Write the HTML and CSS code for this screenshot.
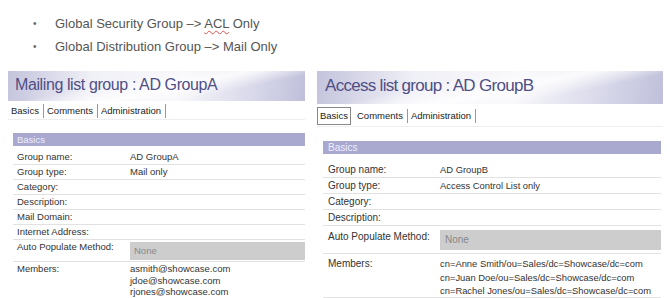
FILE: index.html
```html
<!DOCTYPE html>
<html lang="en">
<head>
  <meta charset="UTF-8">
  <title>AD Groups</title>
  <link rel="stylesheet" href="styles.css">
</head>
<body>

  <ul class="notes">
    <li>Global Security Group –&gt; <span class="typo">ACL</span> Only</li>
    <li>Global Distribution Group –&gt; Mail Only</li>
  </ul>

  <div class="panels">
    <!-- Mailing list group -->
    <div class="panel panel-a">
      <div class="title">Mailing list group : AD GroupA</div>
      <div class="tabs">
        <span class="tab">Basics</span>
        <span class="tab">Comments</span>
        <span class="tab">Administration</span>
      </div>
      <div class="section">Basics</div>
      <div class="row"><span class="label">Group name:</span><span class="value">AD GroupA</span></div>
      <div class="row"><span class="label">Group type:</span><span class="value">Mail only</span></div>
      <div class="row"><span class="label">Category:</span></div>
      <div class="row"><span class="label">Description:</span></div>
      <div class="row"><span class="label">Mail Domain:</span></div>
      <div class="row"><span class="label">Internet Address:</span></div>
      <div class="row row-auto"><span class="label">Auto Populate Method:</span><span class="select">None</span></div>
      <div class="row row-members">
        <span class="label">Members:</span>
        <span class="value">asmith@showcase.com<br>jdoe@showcase.com<br>rjones@showcase.com</span>
      </div>
    </div>

    <!-- Access list group -->
    <div class="panel panel-b">
      <div class="title">Access list group : AD GroupB</div>
      <div class="tabs">
        <span class="tab active">Basics</span>
        <span class="tab">Comments</span>
        <span class="tab">Administration</span>
      </div>
      <div class="section">Basics</div>
      <div class="row"><span class="label">Group name:</span><span class="value">AD GroupB</span></div>
      <div class="row"><span class="label">Group type:</span><span class="value">Access Control List only</span></div>
      <div class="row"><span class="label">Category:</span></div>
      <div class="row"><span class="label">Description:</span></div>
      <div class="row row-auto"><span class="label">Auto Populate Method:</span><span class="select">None</span></div>
      <div class="row row-members">
        <span class="label">Members:</span>
        <span class="value">cn=Anne Smith/ou=Sales/dc=Showcase/dc=com<br>cn=Juan Doe/ou=Sales/dc=Showcase/dc=com<br>cn=Rachel Jones/ou=Sales/dc=Showcase/dc=com</span>
      </div>
    </div>
  </div>

</body>
</html>
```

FILE: styles.css
```css
body {
  margin: 0;
  padding: 0 7px 0 8px;
  background: #fff;
  font-family: "Liberation Sans", Arial, sans-serif;
  color: #333;
  overflow: hidden;
}

.notes {
  margin: 0;
  padding: 15px 0 0 47px;
  list-style: none;
  font-size: 13px;
  color: #555;
}

.notes li {
  position: relative;
  height: 23px;
  line-height: 17px;
}

.notes li::before {
  content: "•";
  position: absolute;
  left: -22px;
  font-size: 10px;
  color: #666;
}

.typo {
  text-decoration: underline wavy #e05050;
  text-decoration-thickness: 1px;
  text-underline-offset: 2px;
}

.panels {
  display: flex;
  gap: 12px;
  margin-top: 10px;
}

.panel {
  display: flex;
  flex-direction: column;
}

.panel-a {
  width: 297px;
}

.panel-b {
  width: 346px;
}

.title {
  color: #4f4f86;
  background:
    linear-gradient(168deg, rgba(255,255,255,0) 35%, rgba(255,255,255,0.85) 55%, rgba(255,255,255,0) 72%),
    linear-gradient(100deg, #c3c3dc 0%, #f0f0f7 28%, #f7f7fb 58%, #d6d6e9 84%, #bfbfda 100%);
  white-space: nowrap;
}

.panel-a .title {
  height: 30px;
  padding-left: 7px;
  font-size: 16px;
  letter-spacing: -0.4px;
  line-height: 28px;
}

.panel-b .title {
  height: 33px;
  padding-left: 8px;
  font-size: 17px;
  letter-spacing: -0.7px;
  line-height: 30px;
}

.tabs {
  display: flex;
  align-items: center;
  border-bottom: 1px solid #eee;
}

.panel-a .tabs {
  margin-top: 2px;
  height: 16px;
  font-size: 9.5px;
}

.panel-b .tabs {
  margin-top: 2px;
  height: 20px;
  font-size: 9.5px;
}

.tab {
  padding: 0 4px 0 3px;
  border-right: 1px solid #999;
  line-height: 14px;
  color: #222;
}

.tab.active {
  border: 1px solid #888;
  padding: 1px 2px;
  margin-right: 3px;
}

.section {
  background: #a9a9cf;
  color: #eef;
}

.panel-a .section {
  margin: 13px 0 4px 5px;
  height: 13px;
  padding-left: 4px;
  font-size: 9.5px;
  line-height: 13px;
}

.panel-b .section {
  margin: 14px 2px 8px 6px;
  height: 13px;
  padding-left: 5px;
  font-size: 10px;
  line-height: 13px;
}

.row {
  display: flex;
  align-items: flex-start;
  border-bottom: 1px solid #e2e2e2;
  color: #333;
  white-space: nowrap;
}

.panel-a .row {
  margin-left: 5px;
  height: 14px;
  padding-left: 4px;
  font-size: 9.5px;
  line-height: 14px;
}

.panel-b .row {
  margin: 0 2px 0 6px;
  height: 15px;
  padding-left: 5px;
  font-size: 10px;
  line-height: 15px;
}

.panel-b .value {
  font-size: 9.4px;
}

.label {
  flex: none;
}

.panel-a .label {
  width: 113px;
}

.panel-b .label {
  width: 112px;
}

.select {
  flex: 1;
  background: #cdcdcd;
  color: #888;
}

.panel-a .row-auto {
  height: 21px;
}

.panel-a .row-auto .select {
  margin-top: 2px;
  height: 18px;
  line-height: 18px;
  padding-left: 4px;
}

.panel-b .row-auto {
  height: 24px;
  padding-top: 3px;
}

.panel-b .row-auto .select {
  margin-top: 1px;
  height: 20px;
  line-height: 20px;
  padding-left: 5px;
}

.panel-a .row-members {
  height: 36px;
  padding-top: 1px;
  line-height: 11.5px;
}

.panel-b .row-members {
  height: 40px;
  padding-top: 3px;
  line-height: 13.5px;
}
```
